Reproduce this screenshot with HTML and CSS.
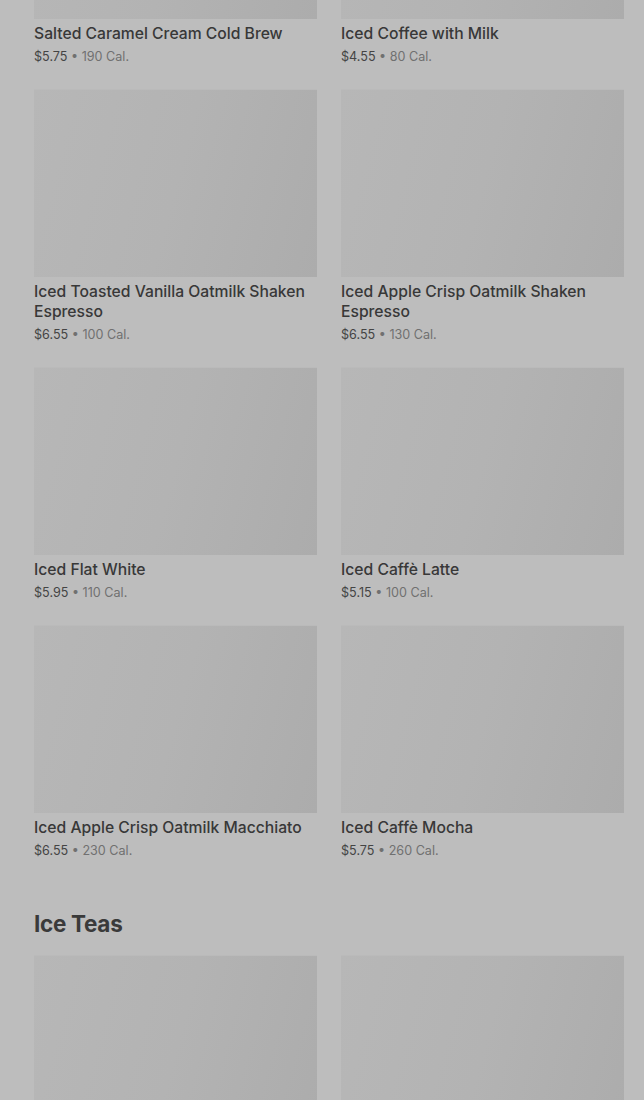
FILE: index.html
```html
<!DOCTYPE html>
<html lang="en">
<head>
  <meta charset="UTF-8" />
  <meta name="viewport" content="width=device-width, initial-scale=1.0"/>
  <title>Menu</title>
  <link rel="stylesheet" href="styles.css">
</head>
<body>
  <div class="menu">
    <section class="category">
      <div class="grid">
        <div class="card">
          <div class="thumb"></div>
          <div class="name">Salted Caramel Cream Cold Brew</div>
          <div class="meta"><span class="price">$5.75</span> • 190 Cal.</div>
        </div>
        <div class="card">
          <div class="thumb"></div>
          <div class="name">Iced Coffee with Milk</div>
          <div class="meta"><span class="price">$4.55</span> • 80 Cal.</div>
        </div>
        <div class="card">
          <div class="thumb"></div>
          <div class="name">Iced Toasted Vanilla Oatmilk Shaken Espresso</div>
          <div class="meta"><span class="price">$6.55</span> • 100 Cal.</div>
        </div>
        <div class="card">
          <div class="thumb"></div>
          <div class="name">Iced Apple Crisp Oatmilk Shaken Espresso</div>
          <div class="meta"><span class="price">$6.55</span> • 130 Cal.</div>
        </div>
        <div class="card">
          <div class="thumb"></div>
          <div class="name">Iced Flat White</div>
          <div class="meta"><span class="price">$5.95</span> • 110 Cal.</div>
        </div>
        <div class="card">
          <div class="thumb"></div>
          <div class="name">Iced Caffè Latte</div>
          <div class="meta"><span class="price">$5.15</span> • 100 Cal.</div>
        </div>
        <div class="card">
          <div class="thumb"></div>
          <div class="name">Iced Apple Crisp Oatmilk Macchiato</div>
          <div class="meta"><span class="price">$6.55</span> • 230 Cal.</div>
        </div>
        <div class="card">
          <div class="thumb"></div>
          <div class="name">Iced Caffè Mocha</div>
          <div class="meta"><span class="price">$5.75</span> • 260 Cal.</div>
        </div>
      </div>
    </section>

    <section class="category">
      <h2>Ice Teas</h2>
      <div class="grid">
        <div class="card">
          <div class="thumb"></div>
        </div>
        <div class="card">
          <div class="thumb"></div>
        </div>
      </div>
    </section>
  </div>
</body>
</html>
```

FILE: styles.css
```css
body {
  margin: 0;
  background: #bdbdbd;
  font-family: Inter, "Noto Sans", sans-serif;
  color: #383838;
}
.menu {
  margin-top: -169px;
  padding: 0 20px 0 34px;
}
.category {
  margin-bottom: 48px;
}
.grid {
  display: grid;
  grid-template-columns: 1fr 1fr;
  column-gap: 24px;
  row-gap: 23px;
}
.thumb {
  height: 188px;
  background: linear-gradient(105deg, #b7b7b7 0%, #b3b3b3 50%, #acacac 100%);
  border-top: 1px solid #bababa;
  box-sizing: border-box;
}
.name {
  margin-top: 5px;
  font-size: 15.7px;
  font-weight: 500;
  line-height: 20px;
  color: #383838;
}
.meta {
  margin-top: 4px;
  font-size: 12.6px;
  line-height: 18px;
  color: #707070;
}
.price {
  color: #444444;
}
h2 {
  margin: 0 0 15px;
  font-size: 22.5px;
  line-height: 32px;
  font-weight: 700;
  color: #3a3a3a;
  letter-spacing: -0.3px;
}
```
